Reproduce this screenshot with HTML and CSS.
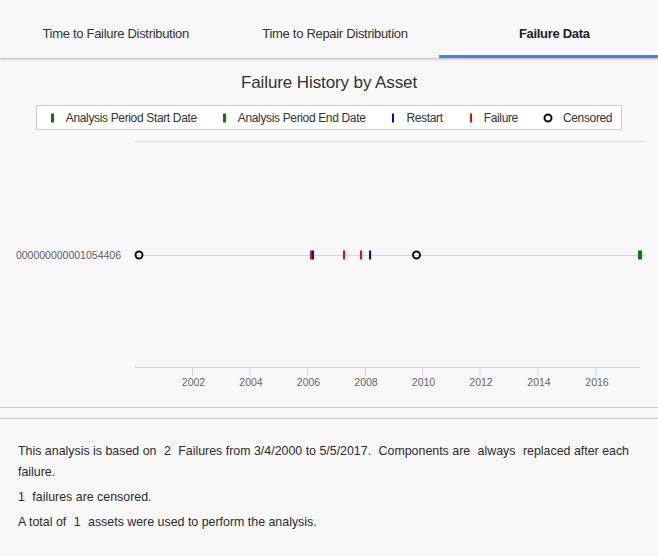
FILE: index.html
```html
<!DOCTYPE html>
<html>
<head>
<meta charset="utf-8">
<link rel="stylesheet" href="styles.css">
</head>
<body>
<div class="tabs">
  <div class="tab">Time to Failure Distribution</div>
  <div class="tab">Time to Repair Distribution</div>
  <div class="tab active">Failure Data</div>
</div>
<div class="chart-panel">
  <div class="title">Failure History by Asset</div>
  <div class="legend-wrap">
    <div class="legend">
      <div class="item"><svg class="mark" width="6" height="10"><rect x="1" y="0.5" width="3" height="9" fill="#008000"/></svg><span>Analysis Period Start Date</span></div>
      <div class="item"><svg class="mark" width="6" height="10"><rect x="1" y="0.5" width="3" height="9" fill="#008000"/></svg><span>Analysis Period End Date</span></div>
      <div class="item"><svg class="mark" width="6" height="10"><rect x="2" y="0.5" width="2" height="9" fill="#0000ff"/></svg><span>Restart</span></div>
      <div class="item"><svg class="mark" width="6" height="10"><rect x="2" y="0.5" width="2" height="9" fill="#ff0000"/></svg><span>Failure</span></div>
      <div class="item"><svg class="mark circ" width="10" height="10"><circle cx="5" cy="5" r="3.5" fill="none" stroke="#111" stroke-width="2"/></svg><span>Censored</span></div>
    </div>
  </div>
  <svg class="chart" width="658" height="265" viewBox="0 0 658 265">
    <line x1="135" y1="6.5" x2="645" y2="6.5" stroke="#dedede" stroke-width="1"/>
    <line x1="135" y1="120.5" x2="645" y2="120.5" stroke="#d6d6d6" stroke-width="1"/>
    <text x="121" y="124" class="asset">000000000001054406</text>
    <rect x="310" y="115.5" width="2" height="9" fill="#ff0000"/>
    <rect x="312" y="115.5" width="2" height="9" fill="#0000ff"/>
    <rect x="343" y="115.5" width="2" height="9" fill="#ff0000"/>
    <rect x="360" y="115.5" width="2" height="9" fill="#ff0000"/>
    <rect x="369" y="115.5" width="2" height="9" fill="#0000ff"/>
    <rect x="638" y="115.5" width="4" height="9" fill="#008000"/>
    <circle cx="139" cy="120" r="3.5" fill="none" stroke="#111" stroke-width="2"/>
    <circle cx="416.5" cy="120" r="3.5" fill="none" stroke="#111" stroke-width="2"/>
    <line x1="135" y1="232.5" x2="640" y2="232.5" stroke="#ccd6eb" stroke-width="1"/>
    <g stroke="#ccd6eb" stroke-width="1">
      <line x1="192.5" y1="232" x2="192.5" y2="241"/>
      <line x1="250" y1="232" x2="250" y2="241"/>
      <line x1="307.5" y1="232" x2="307.5" y2="241"/>
      <line x1="365.5" y1="232" x2="365.5" y2="241"/>
      <line x1="422.5" y1="232" x2="422.5" y2="241"/>
      <line x1="480" y1="232" x2="480" y2="241"/>
      <line x1="538" y1="232" x2="538" y2="241"/>
      <line x1="596" y1="232" x2="596" y2="241"/>
    </g>
    <g class="axis-label">
      <text x="193.5" y="251">2002</text>
      <text x="251" y="251">2004</text>
      <text x="308.5" y="251">2006</text>
      <text x="366" y="251">2008</text>
      <text x="423.5" y="251">2010</text>
      <text x="481" y="251">2012</text>
      <text x="539" y="251">2014</text>
      <text x="597" y="251">2016</text>
    </g>
  </svg>
</div>
<div class="summary">
  <p>This analysis is based on <span class="val">2</span> Failures from 3/4/2000 to 5/5/2017. <span class="gap"></span>Components are <span class="val">always</span> replaced after each<br>failure.</p>
  <p><span class="val first">1</span> failures are censored.</p>
  <p>A total of <span class="val">1</span> assets were used to perform the analysis.</p>
</div>
</body>
</html>
```
FILE: styles.css
```css
html, body {
  margin: 0;
  padding: 0;
  background: #f8f8f8;
}
body {
  width: 658px;
  height: 556px;
  overflow: hidden;
  font-family: "Liberation Sans", Arial, sans-serif;
  color: #333;
}
.tabs {
  display: flex;
  border-bottom: 1px solid #c6c6c6;
  box-shadow: 0 1px 2px rgba(0,0,0,0.12);
}
.tab {
  flex: 1;
  text-align: center;
  padding: 25px 0 12px 12px;
  line-height: 18px;
  font-size: 13px;
  letter-spacing: -0.3px;
  color: #333;
  border-bottom: 3px solid transparent;
}
.tab.active {
  font-weight: bold;
  color: #222;
  border-bottom-color: #3f86e4;
}
.chart-panel {
  border-bottom: 1px solid #cbcbcb;
  padding-bottom: 7px;
}
.title {
  margin-top: 12px;
  text-align: center;
  font-size: 17px;
  line-height: 24px;
  letter-spacing: -0.1px;
  color: #333;
}
.legend-wrap {
  display: flex;
  justify-content: center;
  margin-top: 10px;
}
.legend {
  display: flex;
  align-items: center;
  gap: 25px;
  height: 23px;
  padding: 0 9px 0 13px;
  background: #fff;
  border: 1px solid #cfcfcf;
  font-size: 12px;
  letter-spacing: -0.35px;
  color: #333;
}
.item {
  display: flex;
  align-items: center;
  gap: 10px;
}
.mark {
  display: block;
}
.chart {
  display: block;
  margin-top: 5px;
}
.asset {
  font-family: "Liberation Sans", Arial, sans-serif;
  font-size: 10.5px;
  fill: #5a5f6a;
  text-anchor: end;
}
.axis-label text {
  font-family: "Liberation Sans", Arial, sans-serif;
  font-size: 10.5px;
  fill: #666;
  text-anchor: middle;
}
.summary {
  margin-top: 10px;
  border-top: 1px solid #cbcbcb;
  padding: 22px 18px 0 18px;
  font-size: 12.4px;
  color: #2b2b2b;
}
.summary p {
  margin: 0 0 4px 0;
  line-height: 21px;
}
.val {
  margin: 0 4px;
}
.val.first {
  margin-left: 0;
}
.gap {
  display: inline-block;
  width: 4px;
}
```
